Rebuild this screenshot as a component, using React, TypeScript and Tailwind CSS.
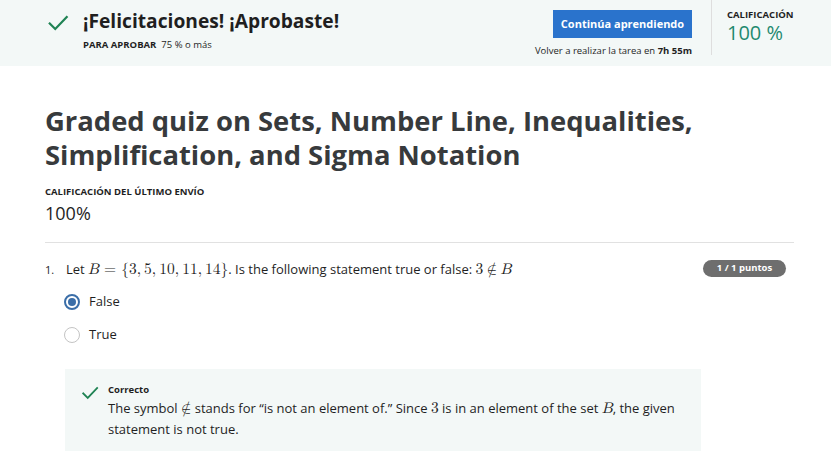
const math = "font-['Latin_Modern_Math','DejaVu_Serif','Liberation_Serif',serif] text-[15.5px] leading-none";

function Check({ className }: { className?: string }) {
  return (
    <svg viewBox="0 0 24 24" className={className} fill="none" stroke="currentColor" strokeWidth="2.4" strokeLinecap="square">
      <path d="M3 12.5l6 6L21.5 5.5" />
    </svg>
  );
}

function NotIn() {
  return <span className={math}>∉</span>;
}

export default function App() {
  return (
    <div className="min-h-screen bg-white font-['Open_Sans',sans-serif] text-[#1f1f1f]">
      <header className="flex h-[66px] bg-[#f3f8f7] pl-[47px] pr-[19px]">
        <div className="flex flex-1 items-start gap-[14px] pt-[8px]">
          <Check className="mt-[4px] h-[22px] w-[22px] text-[#1f8354]" />
          <div>
            <h2 className="text-[19.2px] font-bold leading-[26px] text-[#1f1f1f]">¡Felicitaciones! ¡Aprobaste!</h2>
            <p className="mt-[4px] text-[9.5px] leading-[14px]">
              <span className="font-bold">PARA APROBAR</span>&nbsp; 75 % o más
            </p>
          </div>
        </div>
        <div className="flex flex-col items-end pt-[10px]">
          <button className="h-[28px] w-[139px] bg-[#2a73cc] text-[11px] font-bold text-white">Continúa aprendiendo</button>
          <p className="mt-[6px] text-[9.5px] leading-[14px]">
            Volver a realizar la tarea en <span className="font-bold">7h 55m</span>
          </p>
        </div>
        <div className="ml-[19px] h-[55px] w-px bg-[#dedede]" />
        <div className="w-[100px] pl-[15px] pt-[8px]">
          <p className="text-[9.5px] font-bold leading-[14px]">CALIFICACIÓN</p>
          <p className="text-[20px] leading-[22px] text-[#1f8a70]">100 %</p>
        </div>
      </header>

      <main className="pl-[45px] pr-[37px]">
        <h1 className="pt-[38px] text-[27.4px] font-bold leading-[34px] text-[#373a3c]">
          Graded quiz on Sets, Number Line, Inequalities,
          <br />
          Simplification, and Sigma Notation
        </h1>
        <p className="mt-[13px] text-[9.5px] font-bold leading-[14px]">CALIFICACIÓN DEL ÚLTIMO ENVÍO</p>
        <p className="mt-[2px] text-[18px] leading-[24px] text-[#1f1f1f]">100%</p>
        <div className="mt-[17px] h-px bg-[#e1e1e1]" />

        <div className="mt-[16px] flex items-start">
          <span className="w-[21px] pt-[1px] text-[11px] leading-[20px]">1.</span>
          <div className="flex-1">
            <p className="text-[13px] leading-[20px]">
              Let <span className={`${math} italic`}>B</span>
              <span className={`${math} mx-[5px]`}>=</span>
              <span className={math}>{"{"}3,&thinsp;5,&thinsp;10,&thinsp;11,&thinsp;14{"}"}</span>. Is the following statement true or false:{" "}
              <span className={math}>3</span> <NotIn /> <span className={`${math} italic`}>B</span>
            </p>
          </div>
          <span className="mt-[1px] flex h-[17px] w-[83px] items-center justify-center rounded-full bg-[#6e6e6e] text-[9.5px] font-bold text-white">
            1 / 1 puntos
          </span>
          <span className="w-[8px]" />
        </div>

        <div className="mt-[12px] flex flex-col gap-[13px] pl-[19px]">
          <label className="flex h-[20px] items-center gap-[9px] text-[13px]">
            <span className="flex h-[16px] w-[16px] items-center justify-center rounded-full border-[2px] border-[#3b6ea8]">
              <span className="h-[8px] w-[8px] rounded-full bg-[#3b6ea8]" />
            </span>
            False
          </label>
          <label className="flex h-[20px] items-center gap-[9px] text-[13px]">
            <span className="h-[16px] w-[16px] rounded-full border-[1.5px] border-[#c4c4c4]" />
            True
          </label>
        </div>

        <div className="ml-[20px] mt-[24px] w-[636px] bg-[#f3f8f7] pb-[11px] pl-[16px] pr-[16px] pt-[13px]">
          <div className="flex gap-[9px]">
            <Check className="mt-[2px] h-[18px] w-[18px] shrink-0 text-[#1f8354]" />
            <div>
              <p className="text-[9.5px] font-bold leading-[16px]">Correcto</p>
              <p className="text-[13px] leading-[21px]">
                The symbol <NotIn /> stands for “is not an element of.” Since <span className={math}>3</span> is in an element of the set{" "}
                <span className={`${math} italic`}>B</span>, the given statement is not true.
              </p>
            </div>
          </div>
        </div>
      </main>
    </div>
  );
}
